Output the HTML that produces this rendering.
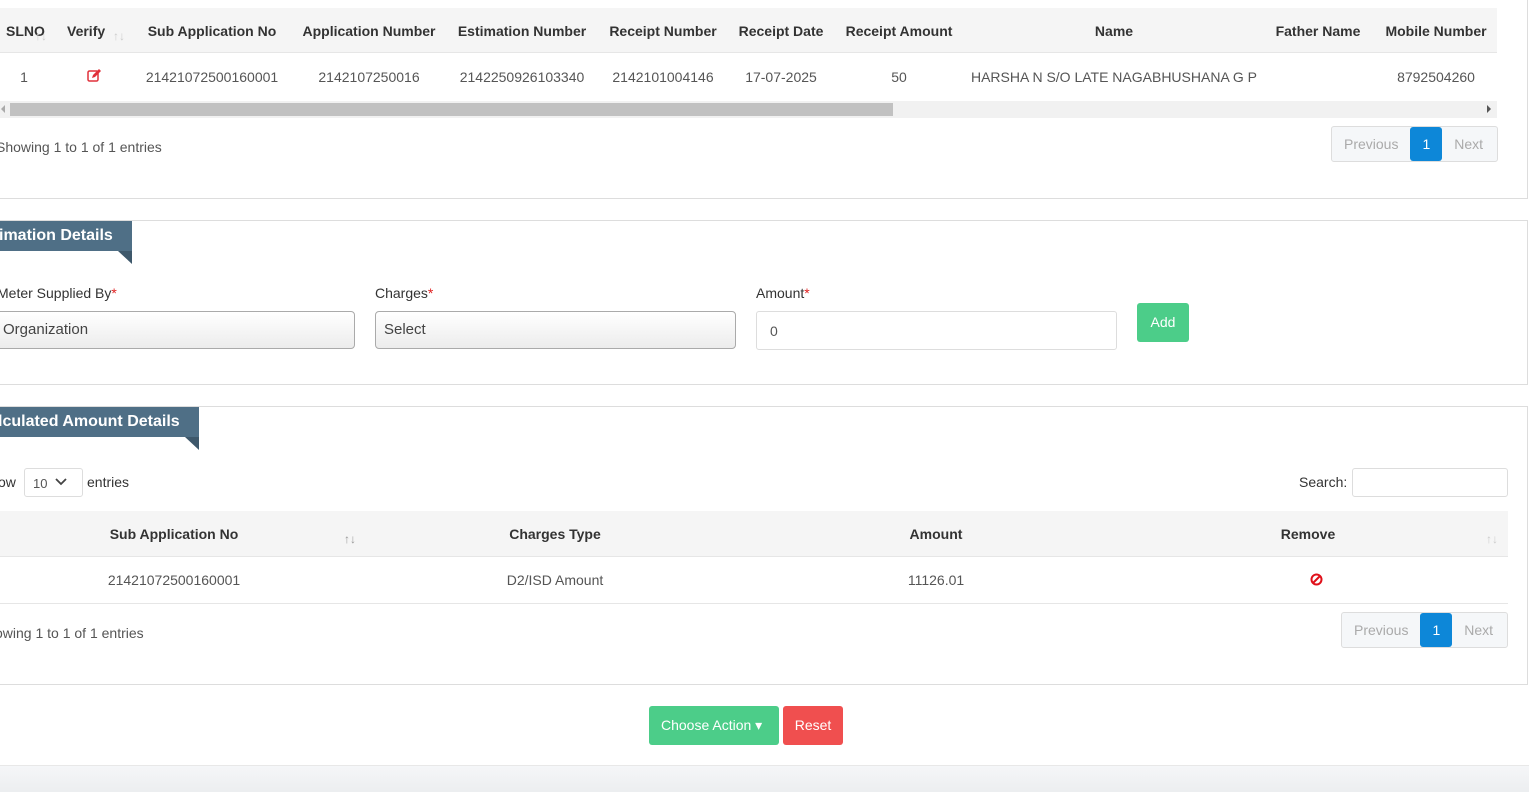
<!DOCTYPE html>
<html><head><meta charset="utf-8"><style>
*{box-sizing:border-box;margin:0;padding:0}
body{width:1529px;height:792px;overflow:hidden;background:#fff;font-family:"Liberation Sans",sans-serif;font-size:14px;color:#555;position:relative}
.a{position:absolute;white-space:nowrap}
.c{transform:translateX(-50%)}
.h{color:#333;font-weight:bold;font-size:14px}
.card{position:absolute;left:-2px;right:1px;border:1px solid #ddd;background:#fff}
.rib{position:absolute;left:0;background:#4f6f86;color:#fff;font-weight:bold;font-size:16px;height:30px;line-height:30px}
.tri{position:absolute;width:0;height:0;border-top:13px solid #3e586b;border-left:14px solid transparent}
.pg{position:absolute;height:36px;border:1px solid #ddd;border-radius:3px;background:#f5f7f9;display:flex;font-size:14px;color:#aaa}
.pg span{display:block;line-height:34px;padding:0 12px}
.pg .on{background:#0d87d8;color:#fff;border-radius:3px;padding:0 12px}
.red{color:#e02020}
.sa{font-size:12px;color:#ccc}
.sel{position:absolute;height:38px;border:1px solid #aaa;border-radius:4px;background:linear-gradient(#fff,#ececec);font-size:15px;color:#444;line-height:36px;padding-left:8px}
</style></head><body>
<!-- card 1 -->
<div class="card" style="top:-2px;height:201px"></div>
<div class="a" style="left:0;top:8px;width:1497px;height:45px;background:#f5f5f5;border-bottom:1px solid #e6e6e6"></div>
<div class="a h" style="left:6px;top:23px">SLNO</div>
<div class="a sa" style="left:35px;top:29px">↑↓</div>
<div class="a h" style="left:67px;top:23px">Verify</div>
<div class="a sa" style="left:113px;top:29px">↑↓</div>
<div class="a h c" style="left:212px;top:23px">Sub Application No</div>
<div class="a h c" style="left:369px;top:23px">Application Number</div>
<div class="a h c" style="left:522px;top:23px">Estimation Number</div>
<div class="a h c" style="left:663px;top:23px">Receipt Number</div>
<div class="a h c" style="left:781px;top:23px">Receipt Date</div>
<div class="a h c" style="left:899px;top:23px">Receipt Amount</div>
<div class="a h c" style="left:1114px;top:23px">Name</div>
<div class="a h c" style="left:1318px;top:23px">Father Name</div>
<div class="a h c" style="left:1436px;top:23px">Mobile Number</div>
<div class="a c" style="left:24px;top:69px">1</div>
<svg class="a" style="left:87px;top:69px" width="14" height="13" viewBox="0 0 14 13"><rect x="1" y="2" width="10" height="10" rx="1.5" fill="none" stroke="#e0303a" stroke-width="1.5"/><path d="M5 9l1-3 6-6 2 2-6 6z" fill="#e0303a"/></svg>
<div class="a c" style="left:212px;top:69px">21421072500160001</div>
<div class="a c" style="left:369px;top:69px">2142107250016</div>
<div class="a c" style="left:522px;top:69px">2142250926103340</div>
<div class="a c" style="left:663px;top:69px">2142101004146</div>
<div class="a c" style="left:781px;top:69px">17-07-2025</div>
<div class="a c" style="left:899px;top:69px">50</div>
<div class="a c" style="left:1114px;top:69px">HARSHA N S/O LATE NAGABHUSHANA G P</div>
<div class="a c" style="left:1436px;top:69px">8792504260</div>
<div class="a" style="left:0;top:101px;width:1497px;height:17px;background:#f1f1f1"></div>
<div class="a" style="left:10px;top:103px;width:883px;height:13px;background:#c1c1c1"></div>
<div class="a" style="left:1487px;top:105px;width:0;height:0;border-left:4px solid #555;border-top:4px solid transparent;border-bottom:4px solid transparent"></div>
<div class="a" style="left:1px;top:105px;width:0;height:0;border-right:4px solid #aaa;border-top:4px solid transparent;border-bottom:4px solid transparent"></div>
<div class="a" style="left:-4px;top:139px">Showing 1 to 1 of 1 entries</div>
<div class="pg" style="left:1331px;top:126px;width:167px"><span>Previous</span><span class="on">1</span><span>Next</span></div>

<!-- card 2 -->
<div class="card" style="top:220px;height:165px"></div>
<div class="rib" style="top:221px;width:132px;overflow:hidden;text-indent:-1px">imation Details</div>
<div class="tri" style="left:118px;top:251px"></div>
<div class="a" style="left:-3px;top:285px;color:#333">Meter Supplied By<span class="red">*</span></div>
<div class="a" style="left:375px;top:285px;color:#333">Charges<span class="red">*</span></div>
<div class="a" style="left:756px;top:285px;color:#333">Amount<span class="red">*</span></div>
<div class="sel" style="left:-10px;top:311px;width:365px;padding-left:12px">Organization</div>
<div class="sel" style="left:375px;top:311px;width:361px">Select</div>
<div class="a" style="left:756px;top:311px;width:361px;height:39px;border:1px solid #ddd;border-radius:3px;padding:11px 0 0 13px;font-size:14px">0</div>
<div class="a" style="left:1137px;top:303px;width:52px;height:39px;background:#4ccd89;border-radius:3px;color:#fff;text-align:center;line-height:39px">Add</div>

<!-- card 3 -->
<div class="card" style="top:406px;height:279px"></div>
<div class="rib" style="top:407px;width:199px;overflow:hidden;text-indent:-2px">lculated Amount Details</div>
<div class="tri" style="left:185px;top:437px"></div>
<div class="a" style="left:-2px;top:474px;color:#333">ow</div>
<div class="a" style="left:24px;top:468px;width:59px;height:29px;border:1px solid #ddd;border-radius:3px;font-size:13px;padding:7px 0 0 8px">10</div>
<svg class="a" style="left:55px;top:477px" width="12" height="9" viewBox="0 0 12 9"><path d="M1 2l5 5 5-5" fill="none" stroke="#444" stroke-width="1.8"/></svg>
<div class="a" style="left:87px;top:474px;color:#333">entries</div>
<div class="a" style="left:1299px;top:474px;color:#333">Search:</div>
<div class="a" style="left:1352px;top:468px;width:156px;height:29px;border:1px solid #ddd;border-radius:3px"></div>
<div class="a" style="left:0;top:511px;width:1508px;height:46px;background:#f5f5f5;border-bottom:1px solid #e6e6e6"></div>
<div class="a h c" style="left:174px;top:526px">Sub Application No</div>
<div class="a sa" style="left:344px;top:532px;color:#999">↑↓</div>
<div class="a h c" style="left:555px;top:526px">Charges Type</div>
<div class="a h c" style="left:936px;top:526px">Amount</div>
<div class="a h c" style="left:1308px;top:526px">Remove</div>
<div class="a sa" style="left:1486px;top:532px">↑↓</div>
<div class="a c" style="left:174px;top:572px">21421072500160001</div>
<div class="a c" style="left:555px;top:572px">D2/ISD Amount</div>
<div class="a c" style="left:936px;top:572px">11126.01</div>
<svg class="a" style="left:1310px;top:573px" width="13" height="13" viewBox="0 0 13 13"><circle cx="6.5" cy="6.5" r="5" fill="none" stroke="#e0101a" stroke-width="2"/><path d="M3 10L10 3" stroke="#e0101a" stroke-width="2"/></svg>
<div class="a" style="left:0;top:603px;width:1508px;height:1px;background:#e6e6e6"></div>
<div class="a" style="left:-5px;top:625px">owing 1 to 1 of 1 entries</div>
<div class="pg" style="left:1341px;top:612px;width:167px"><span>Previous</span><span class="on">1</span><span>Next</span></div>

<div class="a" style="left:649px;top:706px;width:130px;height:39px;background:#4ccd89;border-radius:3px;color:#fff;line-height:39px;padding-left:12px;font-size:14px">Choose Action ▾</div>
<div class="a" style="left:783px;top:706px;width:60px;height:39px;background:#f04f4f;border-radius:3px;color:#fff;line-height:39px;text-align:center">Reset</div>
<div class="a" style="left:0;top:765px;width:1529px;height:27px;background:linear-gradient(#f5f6f8,#eceef0);border-top:1px solid #e8e8e8"></div>
</body></html>
